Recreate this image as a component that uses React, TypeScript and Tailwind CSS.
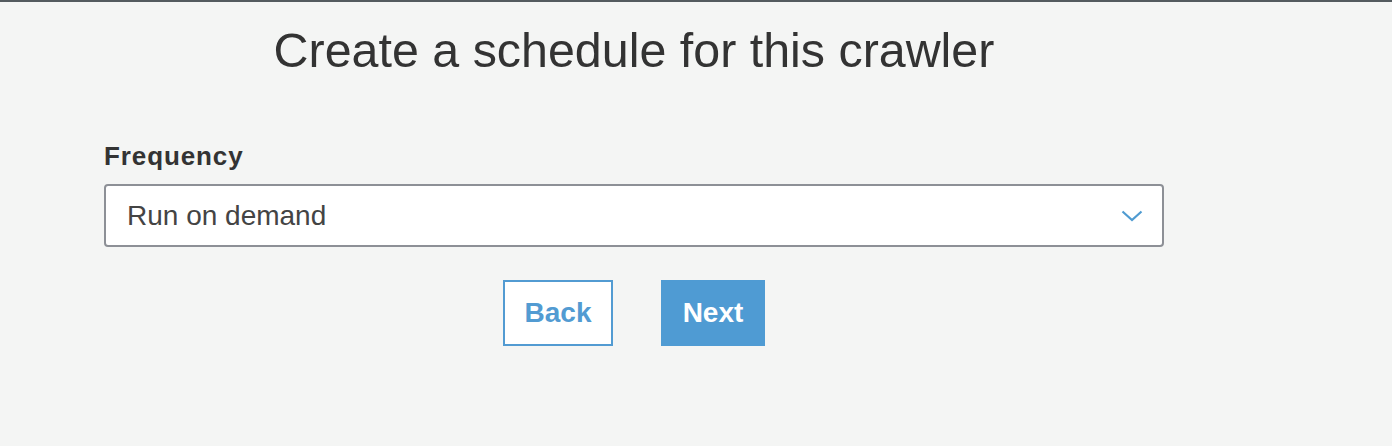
import React from "react";

export default function App() {
  return (
    <div
      className="w-[1392px] h-[446px] bg-[#f4f5f4] border-t-2 border-[#545b5f] overflow-hidden"
      style={{ fontFamily: '"Liberation Sans", Arial, Helvetica, sans-serif' }}
    >
      <div className="ml-[104px] w-[1060px] flex flex-col">
        <h1 className="mt-[20px] text-center text-[48.4px] leading-[56px] text-[#333333] font-normal">
          Create a schedule for this crawler
        </h1>
        <label className="mt-[63px] text-[26px] leading-[30px] tracking-[0.9px] font-bold text-[#333333]">
          Frequency
        </label>
        <div className="mt-[13px] h-[63px] bg-white border-2 border-[#8d9096] rounded-[4px] flex items-center justify-between pl-[21px] pr-[19px]">
          <span className="text-[28px] leading-[32px] text-[#444444]">Run on demand</span>
          <svg width="22" height="12" viewBox="0 0 22 12" fill="none">
            <path d="M1.5 1.5 L11 10 L20.5 1.5" stroke="#4f9bd1" strokeWidth="2.2" />
          </svg>
        </div>
        <div className="mt-[33px] flex justify-center gap-[48px]">
          <button className="w-[110px] h-[66px] bg-white border-2 border-[#529bd2] text-[#529bd2] text-[28px] font-bold">
            Back
          </button>
          <button className="w-[104px] h-[66px] bg-[#4f9bd3] text-white text-[28px] font-bold">
            Next
          </button>
        </div>
      </div>
    </div>
  );
}
